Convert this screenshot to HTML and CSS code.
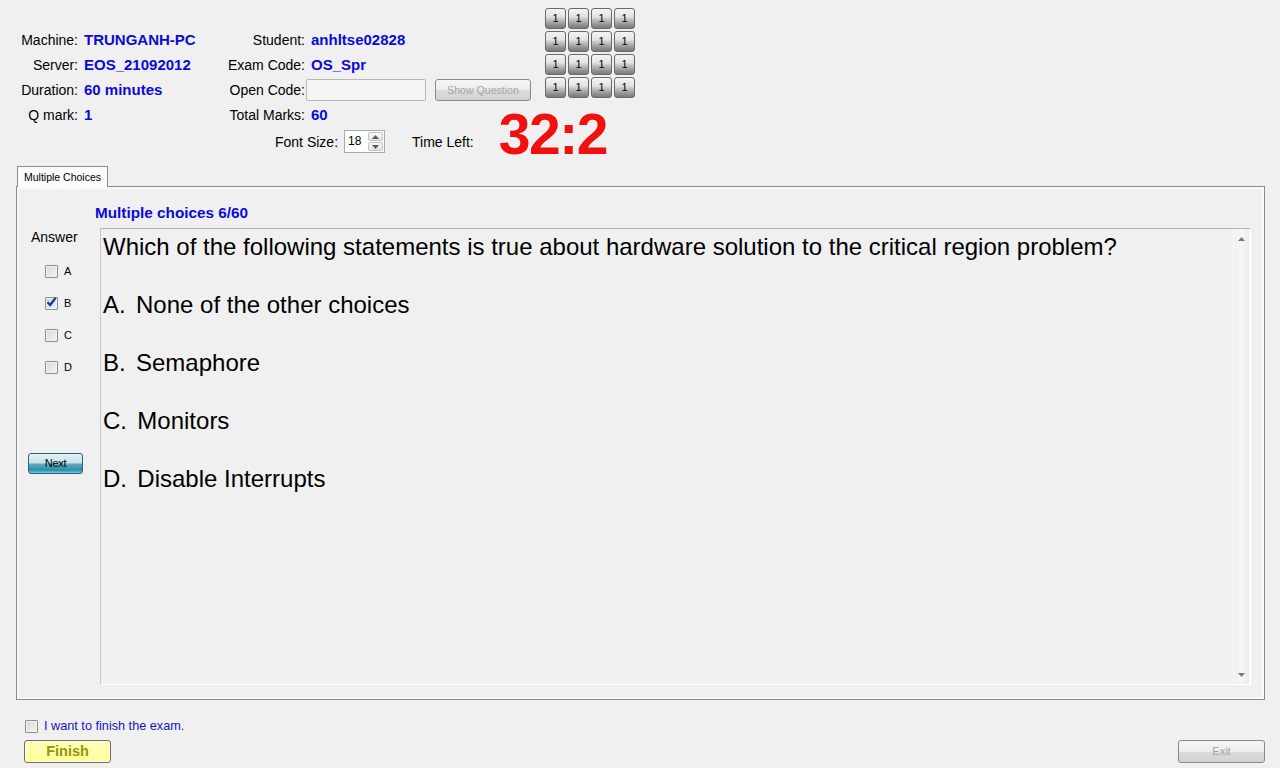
FILE: index.html
```html
<!DOCTYPE html>
<html>
<head>
<meta charset="utf-8">
<title>EOS Exam</title>
<link rel="stylesheet" href="styles.css">
</head>
<body>
<div class="header">
  <div class="info">
    <span class="lbl">Machine:</span><span class="val">TRUNGANH-PC</span>
    <span class="lbl">Student:</span><span class="val">anhltse02828</span>
    <span class="lbl">Server:</span><span class="val">EOS_21092012</span>
    <span class="lbl">Exam Code:</span><span class="val">OS_Spr</span>
    <span class="lbl">Duration:</span><span class="val">60 minutes</span>
    <span class="lbl">Open Code:</span>
    <div class="oc"><span class="textbox"></span><span class="btn-dis show-q">Show Question</span></div>
    <span class="lbl">Q mark:</span><span class="val">1</span>
    <span class="lbl">Total Marks:</span><span class="val">60</span>
  </div>
  <div class="btn-grid">
    <span class="gbtn">1</span><span class="gbtn">1</span><span class="gbtn">1</span><span class="gbtn">1</span>
    <span class="gbtn">1</span><span class="gbtn">1</span><span class="gbtn">1</span><span class="gbtn">1</span>
    <span class="gbtn">1</span><span class="gbtn">1</span><span class="gbtn">1</span><span class="gbtn">1</span>
    <span class="gbtn">1</span><span class="gbtn">1</span><span class="gbtn">1</span><span class="gbtn">1</span>
  </div>
  <div class="font-row">
    <span>Font Size:</span>
    <div class="spinner">
      <span class="spin-val">18</span>
      <div class="spin-btns">
        <span class="spin-b"><svg width="7" height="4" viewBox="0 0 7 4"><polygon points="0,4 3.5,0 7,4" fill="#5a5a5a"/></svg></span>
        <span class="spin-b"><svg width="7" height="4" viewBox="0 0 7 4"><polygon points="0,0 7,0 3.5,4" fill="#5a5a5a"/></svg></span>
      </div>
    </div>
    <span class="time-lbl">Time Left:</span>
    <span class="timer">32:2</span>
  </div>
</div>

<div class="tabs">
  <div class="tab">Multiple Choices</div>
  <div class="panel">
    <div class="qtitle">Multiple choices 6/60</div>
    <div class="answer-col">
      <div class="answer-label">Answer</div>
      <div class="choices">
        <div class="choice"><span class="cb"></span><span>A</span></div>
        <div class="choice"><span class="cb checked"><svg width="13" height="13" viewBox="0 0 13 13"><path d="M2.5 6.2 L5.2 9 L10.6 1.8" stroke="#1b3584" stroke-width="2.2" fill="none"/></svg></span><span>B</span></div>
        <div class="choice"><span class="cb"></span><span>C</span></div>
        <div class="choice"><span class="cb"></span><span>D</span></div>
      </div>
      <div class="next-btn">Next</div>
    </div>
    <div class="qbox">
      <div class="qtext">
        <p>Which of the following statements is true about hardware solution to the critical region problem?</p>
        <p><span class="opt">A.  </span>None of the other choices</p>
        <p><span class="opt">B.  </span>Semaphore</p>
        <p><span class="opt">C.  </span>Monitors</p>
        <p><span class="opt">D.  </span>Disable Interrupts</p>
      </div>
      <div class="scroll">
        <svg width="7" height="4" viewBox="0 0 7 4"><polygon points="0,4 3.5,0 7,4" fill="#7a7a7a"/></svg>
        <svg width="7" height="4" viewBox="0 0 7 4"><polygon points="0,0 7,0 3.5,4" fill="#7a7a7a"/></svg>
      </div>
    </div>
  </div>
</div>

<div class="bottom">
  <div class="finish-col">
    <div class="agree"><span class="cb"></span><span>I want to finish the exam.</span></div>
    <div class="finish-btn">Finish</div>
  </div>
  <div class="btn-dis exit-btn">Exit</div>
</div>
</body>
</html>
```

FILE: styles.css
```css
html, body {
  margin: 0;
  padding: 0;
}
body {
  background: #f0f0f0;
  font-family: "Liberation Sans", Arial, sans-serif;
  color: #000;
  width: 1280px;
  height: 768px;
  overflow: hidden;
}

/* ---------- header ---------- */
.header {
  display: grid;
  grid-template-columns: 535px auto;
  column-gap: 10px;
}
.info {
  display: grid;
  grid-template-columns: 78px 144px 83px 230px;
  grid-auto-rows: 25px;
  align-items: center;
  padding-top: 27px;
}
.lbl {
  font-size: 14px;
  text-align: right;
  white-space: nowrap;
}
.val {
  font-size: 15px;
  font-weight: bold;
  color: #0a0adc;
  padding-left: 6px;
  white-space: nowrap;
}
.oc {
  display: flex;
  align-items: center;
  padding-left: 1px;
}
.textbox {
  width: 120px;
  height: 22px;
  box-sizing: border-box;
  border: 1px solid #b8b8b8;
  border-radius: 2px;
  background: #f5f5f5;
}
.btn-dis {
  box-sizing: border-box;
  border: 1px solid #8a8a8a;
  border-radius: 3px;
  background: linear-gradient(#f6f6f6 0%, #ececec 50%, #dcdcdc 51%, #d2d2d2 100%);
  color: #a6a6a6;
  font-size: 10.6px;
  text-align: center;
}
.show-q {
  margin-left: 9px;
  width: 96px;
  height: 22px;
  line-height: 20px;
}

.btn-grid {
  display: grid;
  grid-template-columns: repeat(4, 21px);
  grid-auto-rows: 21px;
  gap: 2px;
  margin-top: 8px;
  align-self: start;
}
.gbtn {
  box-sizing: border-box;
  border: 1px solid #6a6a6a;
  border-radius: 3px;
  background: linear-gradient(#f4f4f4 0%, #e4e4e4 40%, #c4c4c4 55%, #8e8e8e 85%, #7a7a7a 100%);
  color: #000;
  font-size: 11px;
  line-height: 19px;
  text-align: center;
}

.font-row {
  grid-column: 1 / -1;
  display: flex;
  align-items: center;
  height: 25px;
  margin-top: 2px;
  padding-left: 275px;
  font-size: 14px;
}
.spinner {
  margin-left: 6px;
  width: 41px;
  height: 23px;
  box-sizing: border-box;
  border: 1px solid #a9abb2;
  background: #fff;
  display: flex;
}
.spin-val {
  flex: 1;
  font-size: 12px;
  line-height: 21px;
  padding-left: 3px;
}
.spin-btns {
  width: 15px;
  display: flex;
  flex-direction: column;
  padding: 1px 1px 1px 0;
  gap: 1px;
}
.spin-b {
  flex: 1;
  box-sizing: border-box;
  border: 1px solid #c4c4c4;
  border-radius: 2px;
  background: linear-gradient(#f8f8f8, #e2e2e2);
  display: flex;
  align-items: center;
  justify-content: center;
}
.time-lbl {
  margin-left: 27px;
}
.timer {
  align-self: flex-start;
  margin-left: 25px;
  margin-top: -7px;
  height: 25px;
  line-height: 25px;
  font-size: 57px;
  font-weight: bold;
  letter-spacing: -1.5px;
  color: #f01010;
}

/* ---------- tabs ---------- */
.tabs {
  margin: 12px 0 0 16px;
  width: 1249px;
}
.tab {
  position: relative;
  z-index: 1;
  margin-left: 1px;
  width: 91px;
  height: 21px;
  margin-bottom: -1px;
  box-sizing: border-box;
  border: 1px solid #898c95;
  border-bottom: none;
  background: #fbfbfb;
  font-size: 10.5px;
  line-height: 20px;
  padding-left: 6px;
  white-space: nowrap;
}
.panel {
  height: 514px;
  box-sizing: border-box;
  border: 1px solid #898c95;
  box-shadow: inset 0 0 0 2px #f9f9f9;
  display: grid;
  grid-template-columns: 83px minmax(0, 1fr);
  grid-template-rows: 18px minmax(0, 1fr);
  row-gap: 6px;
  padding: 17px 13px 14px 0;
}
.qtitle {
  grid-column: 2;
  grid-row: 1;
  margin-left: -5px;
  font-size: 15.3px;
  font-weight: bold;
  line-height: 18px;
  color: #0a0adc;
}
.answer-col {
  grid-column: 1;
  grid-row: 2;
}
.answer-label {
  font-size: 14px;
  line-height: 18px;
  margin-left: 14px;
}
.choices {
  margin-top: 9px;
  margin-left: 28px;
}
.choice {
  height: 32px;
  display: flex;
  align-items: center;
  gap: 6px;
  font-size: 11px;
}
.cb {
  width: 13px;
  height: 13px;
  box-sizing: border-box;
  border: 1px solid #8e8f8f;
  border-radius: 1px;
  background: linear-gradient(135deg, #d6d6d6, #f6f6f6);
  box-shadow: inset 0 0 0 1px #f2f2f2;
  position: relative;
  flex: none;
}
.cb.checked {
  background: linear-gradient(135deg, #bcd3ec, #eef4fb);
}
.cb svg {
  position: absolute;
  left: -1px;
  top: -2px;
}
.next-btn {
  margin-top: 70px;
  margin-left: 11px;
  width: 55px;
  height: 21px;
  box-sizing: border-box;
  border: 1px solid #2d5f80;
  border-radius: 3px;
  background: linear-gradient(#e4f2f5 0%, #c6e2ea 45%, #5aa8ba 55%, #2f8ea4 85%, #6cd2e4 100%);
  font-size: 11px;
  line-height: 19px;
  text-align: center;
  letter-spacing: -0.3px;
}
.qbox {
  grid-column: 2;
  grid-row: 2;
  display: flex;
  min-height: 0;
  overflow: hidden;
  box-sizing: border-box;
  border-top: 1px solid #b4b4b4;
  border-left: 1px solid #c8c8c8;
  border-right: 1px solid #ffffff;
  border-bottom: 1px solid #ffffff;
}
.qtext {
  flex: 1;
  padding: 3px 0 0 2px;
  font-size: 24px;
  line-height: 29px;
}
.qtext p {
  margin: 0 0 29px 0;
  white-space: pre;
}
.opt {
  margin-right: -3px;
}
.scroll {
  width: 17px;
  box-sizing: border-box;
  border-left: 1px solid #fbfbfb;
  border-right: 1px solid #fbfbfb;
  background: linear-gradient(90deg, #f0f0f0 0%, #f7f7f7 50%, #ececec 100%);
  display: flex;
  flex-direction: column;
  justify-content: space-between;
  align-items: center;
  padding: 8px 0 7px;
}

/* ---------- bottom ---------- */
.bottom {
  display: flex;
  justify-content: space-between;
  align-items: flex-end;
  padding: 17px 15px 0 24px;
}
.agree {
  display: flex;
  align-items: center;
  gap: 6px;
  height: 18px;
  margin-left: 1px;
  font-size: 12.7px;
  color: #1414c8;
}
.finish-btn {
  margin-top: 5px;
  width: 87px;
  height: 23px;
  box-sizing: border-box;
  border: 1px solid #6e6e6e;
  border-radius: 3px;
  background: linear-gradient(#ffffb8, #ffff98);
  box-shadow: inset 0 0 0 1px #ffffd8;
  color: #94940a;
  font-size: 14.5px;
  font-weight: bold;
  line-height: 21px;
  text-align: center;
}
.exit-btn {
  width: 87px;
  height: 23px;
  line-height: 21px;
  font-size: 11px;
}
```
